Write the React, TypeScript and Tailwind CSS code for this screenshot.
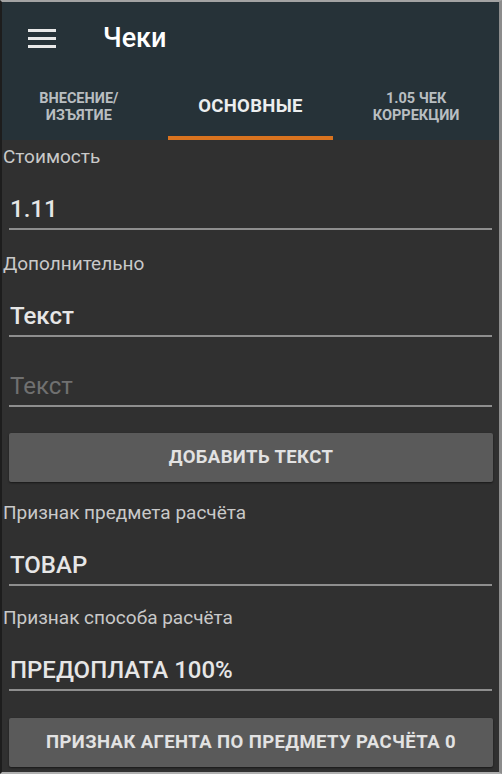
import React from "react";

const font = { fontFamily: "Roboto, 'Noto Sans', sans-serif" };

function Label({ text }: { text: string }) {
  return (
    <div className="flex h-[34px] items-center pl-[1px] text-[19px] text-[#c9c9c9]">
      {text}
    </div>
  );
}

function Input({ value, placeholder, tall }: { value?: string; placeholder?: string; tall?: boolean }) {
  return (
    <div
      className={`mx-[7px] flex items-end border-b-2 border-[#8e8e8e] pb-[4px] pl-[1px] ${
        tall ? "h-[70px]" : "h-[56px]"
      }`}
    >
      {value ? (
        <span className="text-[24px] leading-[30px] font-medium text-[#e6e6e6]">{value}</span>
      ) : (
        <span className="text-[24px] leading-[30px] text-[#707070]">{placeholder}</span>
      )}
    </div>
  );
}

function Button({ text }: { text: string }) {
  return (
    <button className="mx-[7px] flex h-[49px] w-[484px] items-center justify-center rounded-[2px] bg-[#5a5a5a] text-[18.5px] font-bold tracking-[0.4px] text-[#e2e2e2] shadow-[0_1px_2px_rgba(0,0,0,0.5)]">
      {text}
    </button>
  );
}

export default function App() {
  return (
    <div
      style={font}
      className="h-[774px] w-[502px] overflow-hidden border-t-2 border-r-[3px] border-b-2 border-l-2 border-t-[#a3a3a3] border-r-[#8c8c8c] border-b-[#b0b0b0] border-l-[#1d1d1d] bg-[#303030]"
    >
      {/* header */}
      <div className="bg-[#263238]">
        <div className="flex h-[73px] items-center">
          <div className="ml-[26px] flex w-[28px] flex-col gap-[5px]">
            <span className="h-[3px] bg-[#e8e8e8]" />
            <span className="h-[3px] bg-[#e8e8e8]" />
            <span className="h-[3px] bg-[#e8e8e8]" />
          </div>
          <span className="ml-[47px] text-[27px] font-medium text-white">Чеки</span>
        </div>
        <div className="flex h-[65px]">
          <div className="flex w-[166px] flex-col items-center justify-center pr-[12px] pb-[2px] text-center text-[14.5px] leading-[17px] font-bold text-[#b9bec1]">
            <span>ВНЕСЕНИЕ/</span>
            <span>ИЗЪЯТИЕ</span>
          </div>
          <div className="flex w-[166px] flex-col">
            <div className="flex flex-1 items-center justify-center pt-[2px] text-[18.5px] font-bold tracking-[0.3px] text-[#eceeef]">
              ОСНОВНЫЕ
            </div>
            <div className="h-[4px] bg-[#d9731f]" />
          </div>
          <div className="flex w-[166px] flex-col items-center justify-center pb-[2px] text-center text-[14.5px] leading-[17px] font-bold text-[#b9bec1]">
            <span>1.05 ЧЕК</span>
            <span>КОРРЕКЦИИ</span>
          </div>
        </div>
      </div>

      {/* form */}
      <div className="flex flex-col">
        <Label text="Стоимость" />
        <Input value="1.11" />
        <div className="mt-[17px]">
          <Label text="Дополнительно" />
        </div>
        <Input value="Текст" />
        <Input placeholder="Текст" tall />
        <div className="mt-[26px]">
          <Button text="ДОБАВИТЬ ТЕКСТ" />
        </div>
        <div className="mt-[14px]">
          <Label text="Признак предмета расчёта" />
        </div>
        <Input value="ТОВАР" />
        <div className="mt-[15px]">
          <Label text="Признак способа расчёта" />
        </div>
        <Input value="ПРЕДОПЛАТА 100%" />
        <div className="mt-[27px]">
          <Button text="ПРИЗНАК АГЕНТА ПО ПРЕДМЕТУ РАСЧЁТА 0" />
        </div>
      </div>
    </div>
  );
}
